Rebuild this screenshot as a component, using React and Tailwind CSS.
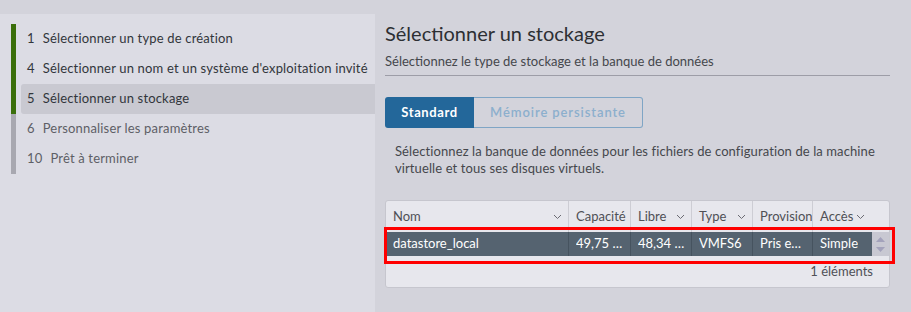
const steps = [
  { n: "1", label: "Sélectionner un type de création", done: true },
  { n: "4", label: "Sélectionner un nom et un système d'exploitation invité", done: true },
  { n: "5", label: "Sélectionner un stockage", done: true, active: true },
  { n: "6", label: "Personnaliser les paramètres" },
  { n: "10", label: "Prêt à terminer" },
];

const columns = [
  { name: "Nom", w: "w-[182px]", value: "datastore_local", chevron: "right" },
  { name: "Capacité", w: "w-[62px]", value: "49,75 Go" },
  { name: "Libre", w: "w-[61px]", value: "48,34 Go", chevron: "right" },
  { name: "Type", w: "w-[61px]", value: "VMFS6", chevron: "right" },
  { name: "Provisionnement", w: "w-[60px]", value: "Pris en charge" },
  { name: "Accès", w: "w-[60px]", value: "Simple", chevron: "inline" },
];

function Chevron() {
  return (
    <svg width="9" height="6" viewBox="0 0 9 6" className="shrink-0">
      <path d="M1 1l3.5 3.5L8 1" fill="none" stroke="#6b6b73" strokeWidth="1" />
    </svg>
  );
}

function Sidebar() {
  return (
    <aside className="w-[375px] shrink-0 bg-[#dcdce4] pt-[10px] pl-[11px]">
      {steps.map((s) => (
        <div key={s.n} className="flex h-[30px]">
          <div className={`w-[5px] ${s.done ? "bg-[#3a6e0a]" : "bg-[#a8a8b0]"}`} />
          <div
            className={`ml-[5px] flex flex-1 items-center gap-[8px] rounded-l-[3px] pl-[6px] text-[13px] tracking-[0.17px] ${
              s.active ? "bg-[#c9c9d1]" : ""
            } ${s.done ? "text-[#32363b]" : "text-[#5e5f66]"}`}
          >
            <span>{s.n}</span>
            <span className="whitespace-nowrap">{s.label}</span>
          </div>
        </div>
      ))}
    </aside>
  );
}

function DatastoreTable() {
  return (
    <div className="relative mt-[23px] rounded-[3px] border border-[#c6c6ce] bg-[#e7e7ed]">
      <div className="flex h-[31px] text-[13px] text-[#4f5056]">
        {columns.map((c, i) => (
          <div
            key={c.name}
            className={`${c.w} flex shrink-0 items-center overflow-hidden whitespace-nowrap pl-[7px] ${
              i > 0 ? "border-l border-[#cdcdd4]" : ""
            } ${c.chevron === "right" ? "justify-between pr-[6px]" : "gap-[3px]"}`}
          >
            <span>{c.name}</span>
            {c.chevron && <Chevron />}
          </div>
        ))}
      </div>
      <div className="flex h-[24px] bg-[#556370] text-[13px] text-white">
        {columns.map((c, i) => (
          <div
            key={c.name}
            className={`${c.w} flex shrink-0 items-center overflow-hidden pl-[7px] pr-[6px] ${
              i > 0 ? "border-l border-[#46535f]" : ""
            }`}
          >
            <span className="truncate">{c.value}</span>
          </div>
        ))}
        <div className="flex w-[17px] shrink-0 flex-col items-center justify-center gap-[5px] bg-[#c8c8d2]">
          <svg width="9" height="5" viewBox="0 0 9 5">
            <path d="M4.5 0L9 5H0z" fill="#a3a2bb" />
          </svg>
          <svg width="9" height="5" viewBox="0 0 9 5">
            <path d="M0 0h9L4.5 5z" fill="#a3a2bb" />
          </svg>
        </div>
      </div>
      <div className="flex h-[31px] items-center justify-end pr-[16px] text-[13px] text-[#4f5056]">
        1 éléments
      </div>
      <div className="absolute -left-[2px] top-[26px] h-[37px] w-[511px] border-[3px] border-[#ff0000]" />
    </div>
  );
}

export default function App() {
  return (
    <div className="flex h-[312px] w-[911px] bg-[#d3d3db] pt-[14px] font-['Lato',sans-serif]">
      <Sidebar />
      <main className="flex-1 pl-[10px] pr-[21px] pt-[7px]">
        <h2 className="text-[20px] leading-[24px] text-[#2d2f33]">Sélectionner un stockage</h2>
        <p className="mt-[7px] text-[13px] leading-[18px] text-[#45474c]">
          Sélectionnez le type de stockage et la banque de données
        </p>
        <div className="mt-[5px] h-px bg-[#9d9da7]" />
        <div className="mt-[21px] flex h-[31px] w-[258px] text-[13px]">
          <button className="w-[89px] rounded-l-[3px] bg-[#23679a] font-bold tracking-[0.6px] text-white">
            Standard
          </button>
          <button className="flex-1 rounded-r-[3px] border border-l-0 border-[#7fa5c5] font-semibold tracking-[0.9px] text-[#8cafcd]">
            Mémoire persistante
          </button>
        </div>
        <p className="mt-[15px] w-[495px] pl-[10px] text-[13px] leading-[17px] tracking-[0.1px] text-[#45474c]">
          Sélectionnez la banque de données pour les fichiers de configuration de la machine virtuelle et tous ses disques virtuels.
        </p>
        <DatastoreTable />
      </main>
    </div>
  );
}
